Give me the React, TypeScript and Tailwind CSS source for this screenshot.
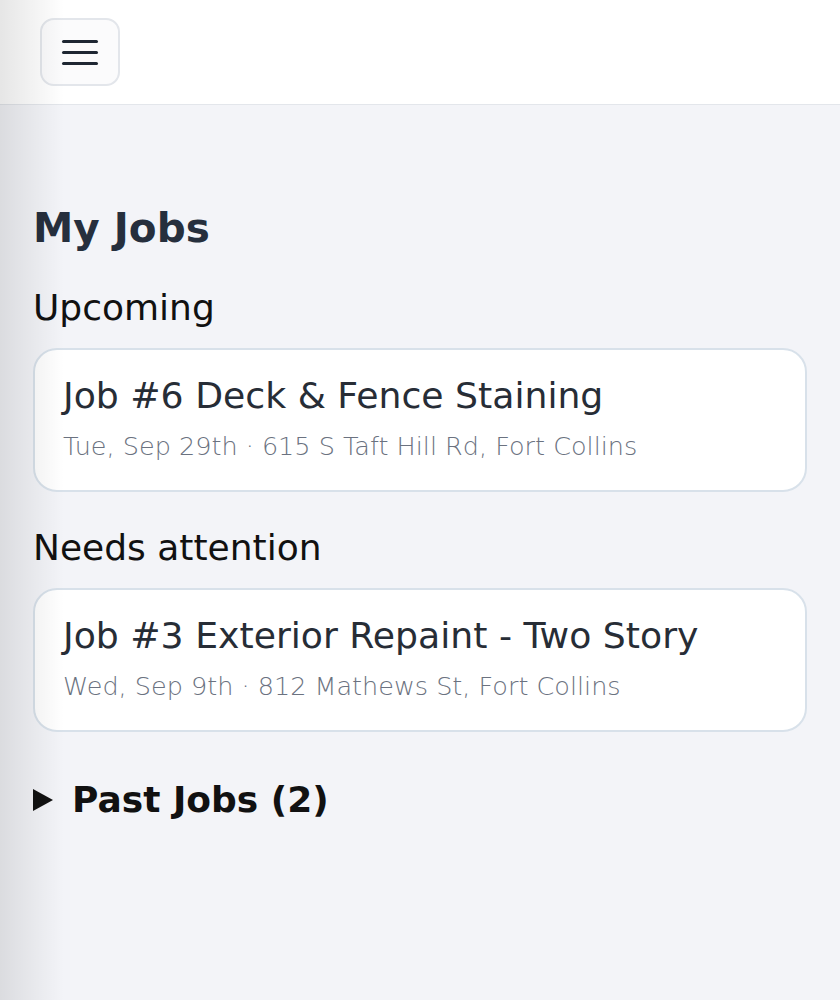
import { useState } from "react";

type Job = {
  id: number;
  title: string;
  date: string;
  address: string;
};

const upcoming: Job[] = [
  { id: 6, title: "Deck & Fence Staining", date: "Tue, Sep 29th", address: "615 S Taft Hill Rd, Fort Collins" },
];

const attention: Job[] = [
  { id: 3, title: "Exterior Repaint - Two Story", date: "Wed, Sep 9th", address: "812 Mathews St, Fort Collins" },
];

function JobCard({ job }: { job: Job }) {
  return (
    <div className="rounded-[24px] border-2 border-[#d8e1ea] bg-white pl-[28px] pr-6 pt-[24px] pb-[28px]">
      <div className="text-[36.2px] leading-[44px] text-[#272d36]">
        Job #{job.id} {job.title}
      </div>
      <div className="mt-[12px] text-[25.5px] font-light leading-[32px] text-[#6b7280]">
        {job.date} · {job.address}
      </div>
    </div>
  );
}

export default function App() {
  const [open, setOpen] = useState(false);

  return (
    <div
      className="relative min-h-[1000px] bg-[#f3f4f8]"
      style={{ fontFamily: '"DejaVu Sans", Verdana, sans-serif' }}
    >
      <header className="h-[105px] border-b border-[#e3e6eb] bg-white pl-[40px] pt-[18px]">
        <button className="flex h-[68px] w-[80px] flex-col items-center justify-center gap-[8px] rounded-[14px] border-2 border-[#e3e6eb] bg-[#fbfbfc]">
          <span className="block h-[3px] w-[36px] rounded-full bg-[#1f2733]" />
          <span className="block h-[3px] w-[36px] rounded-full bg-[#1f2733]" />
          <span className="block h-[3px] w-[36px] rounded-full bg-[#1f2733]" />
        </button>
      </header>

      <main className="px-[33px] pt-[99px]">
        <h1 className="text-[40.5px] font-bold leading-[48px] text-[#262f3d]">My Jobs</h1>

        <h2 className="mt-[34px] text-[36px] leading-[44px] text-[#111]">Upcoming</h2>
        <div className="mt-[18px] flex flex-col gap-4">
          {upcoming.map((j) => (
            <JobCard key={j.id} job={j} />
          ))}
        </div>

        <h2 className="mt-[34px] text-[36px] leading-[44px] text-[#111]">Needs attention</h2>
        <div className="mt-[18px] flex flex-col gap-4">
          {attention.map((j) => (
            <JobCard key={j.id} job={j} />
          ))}
        </div>

        <button
          onClick={() => setOpen(!open)}
          className="mt-[46px] flex items-center text-[36px] font-bold leading-[44px] text-[#111]"
        >
          <svg width="20" height="22" viewBox="0 0 20 22" className="mr-[19px]">
            <path d="M0 0 L20 11 L0 22 Z" fill="#111" />
          </svg>
          Past Jobs (2)
        </button>
      </main>

      <div className="pointer-events-none absolute inset-y-0 left-0 w-[64px] bg-gradient-to-r from-black/10 to-transparent" />
    </div>
  );
}
